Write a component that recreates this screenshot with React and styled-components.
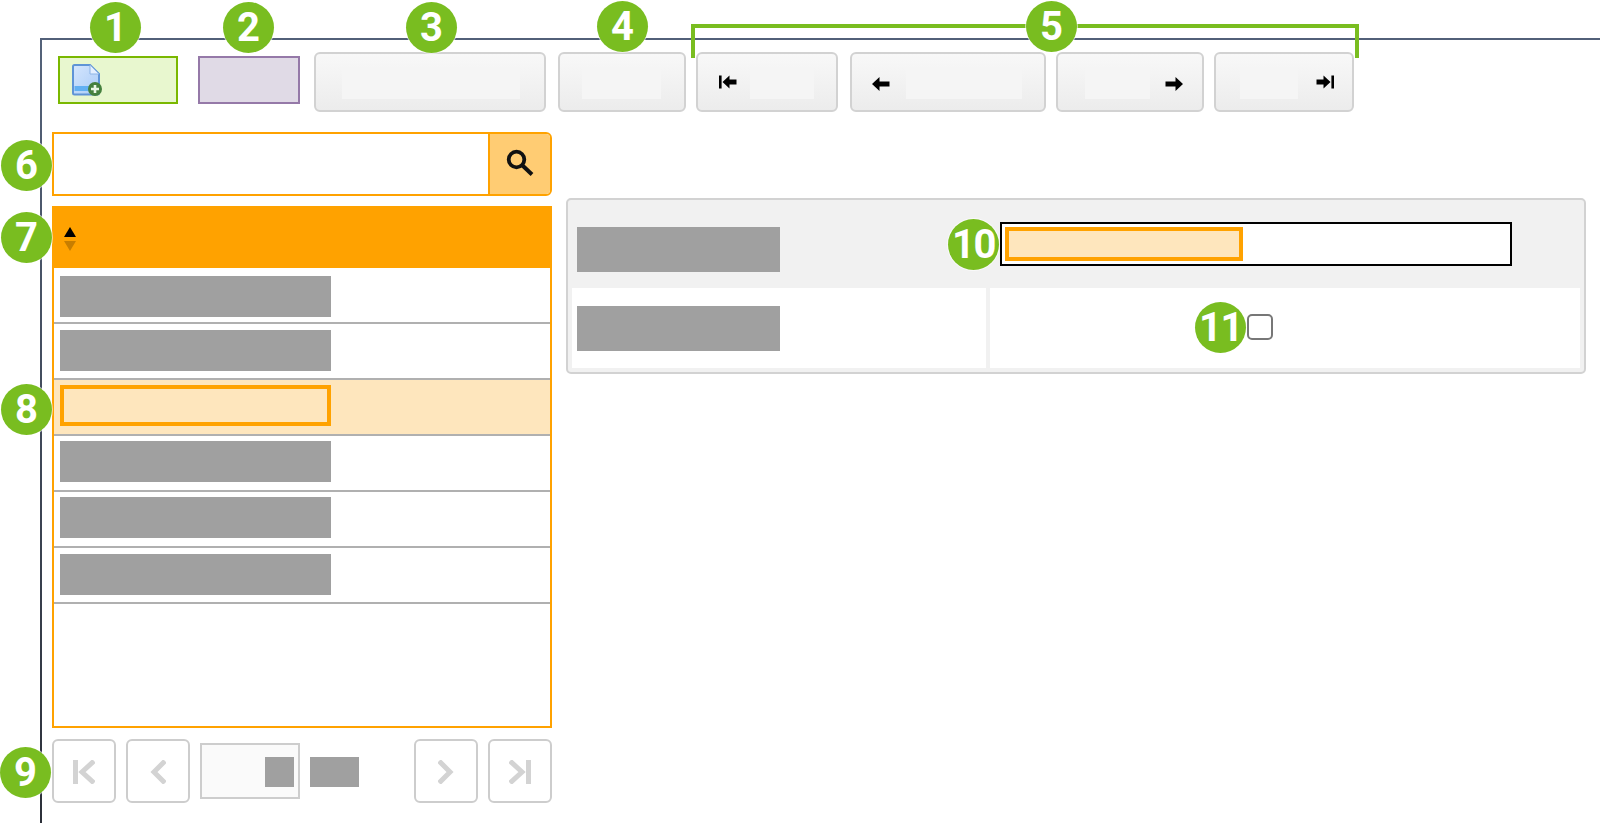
import React from 'react';
import styled, { createGlobalStyle } from 'styled-components';

const palette = {
  green: '#79bd20',
  orange: '#ffa200',
  peach: '#fee6bd',
  gray: '#a0a0a0',
  line: '#d2d2d2',
};

const GlobalStyle = createGlobalStyle`
  html, body {
    margin: 0;
    padding: 0;
    height: 823px;
    overflow: hidden;
    background: #fff;
    font-family: "Liberation Sans", Arial, sans-serif;
  }
  * { box-sizing: border-box; }
`;

const Page = styled.div`
  position: relative;
  width: 1600px;
  height: 823px;
  padding: 38px 0 0 40px;
`;

const Frame = styled.div`
  height: 785px;
  border-top: 2px solid #526079;
  padding: 12px 0 0 2px;
  background: linear-gradient(#55637a, #2c3039) left top / 2px 100% no-repeat;
`;

const Toolbar = styled.div`
  display: flex;
  align-items: flex-start;
  height: 60px;
  padding-left: 16px;
`;

const ColorButton = styled.div`
  width: ${p => p.$w}px;
  height: 48px;
  margin: 4px 0 0 ${p => p.$gap || 0}px;
  padding: 6px 0 0 12px;
  border: 2px solid ${p => p.$border};
  background: ${p => p.$bg};
`;

const ToolButton = styled.div`
  display: flex;
  align-items: center;
  gap: ${p => p.$inner || 0}px;
  width: ${p => p.$w}px;
  height: 60px;
  margin-left: ${p => p.$gap}px;
  padding-left: ${p => p.$pad}px;
  border: 2px solid ${palette.line};
  border-radius: 6px;
  background: linear-gradient(#f8f8f8, #ececec);
`;

const HiddenLabel = styled.span`
  display: block;
  width: ${p => p.$w}px;
  height: 31px;
  margin-top: 3px;
  background: #f5f5f5;
`;

const Blurry = styled.svg`
  display: block;
  flex: none;
  filter: blur(${p => p.$blur || 0.4}px);
`;

const Body = styled.div`
  display: flex;
  align-items: flex-start;
  margin-top: 20px;
  padding-left: 10px;
`;

const LeftColumn = styled.div`
  width: 500px;
`;

const SearchBox = styled.div`
  display: flex;
  height: 64px;
  border: 2px solid ${palette.orange};
  border-radius: 0 6px 6px 0;
`;

const SearchField = styled.div`
  flex: 1;
  background: #fff;
`;

const SearchButton = styled.div`
  display: flex;
  align-items: center;
  justify-content: center;
  width: 62px;
  padding-left: 2px;
  border-left: 2px solid ${palette.orange};
  border-radius: 0 4px 4px 0;
  background: #ffcc73;
`;

const ListBox = styled.div`
  height: 522px;
  margin-top: 10px;
  border: 2px solid ${palette.orange};
  border-top: none;
`;

const ListHeader = styled.div`
  display: flex;
  align-items: center;
  height: 62px;
  margin: 0 -2px;
  padding: 3px 0 0 12px;
  background: ${palette.orange};
`;

const ListRow = styled.div`
  height: 56px;
  padding: ${p => p.$top}px 0 0 6px;
  border-bottom: 2px solid #b0b0b0;
  background: ${p => (p.$selected ? palette.peach : '#fff')};
`;

const RowText = styled.div`
  width: 271px;
  height: 41px;
  background: ${p => (p.$selected ? palette.peach : palette.gray)};
  border: ${p => (p.$selected ? `4px solid ${palette.orange}` : 'none')};
`;

const Pager = styled.div`
  display: flex;
  align-items: center;
  height: 64px;
  margin-top: 11px;
`;

const PageButton = styled.div`
  display: flex;
  align-items: center;
  justify-content: center;
  width: 64px;
  height: 64px;
  margin-left: ${p => p.$gap || 0}px;
  padding-top: 2px;
  border: 2px solid #cdcdcd;
  border-radius: 6px;
  background: #fff;
`;

const PageInput = styled.div`
  display: flex;
  align-items: center;
  justify-content: flex-end;
  width: 101px;
  height: 56px;
  margin-left: 10px;
  padding: 2px 4px 0 0;
  border: 2px solid #cdcdcd;
  background: #fafafa;
`;

const PageNumber = styled.div`
  width: 29px;
  height: 30px;
  background: ${palette.gray};
`;

const PageTotal = styled.div`
  width: 49px;
  height: 30px;
  margin: 2px 55px 0 10px;
  background: ${palette.gray};
`;

const DetailPanel = styled.div`
  width: 1020px;
  height: 176px;
  margin: 66px 0 0 14px;
  padding: 0 4px;
  border: 2px solid ${palette.line};
  border-radius: 5px;
  background: #f1f1f1;
`;

const DetailRow = styled.div`
  display: grid;
  grid-template-columns: 414px 590px;
  gap: 4px;
  height: ${p => p.$h}px;
`;

const NameCell = styled.div`
  padding: ${p => p.$top}px 0 0 5px;
  background: ${p => (p.$white ? '#fff' : 'transparent')};
`;

const ValueCell = styled.div`
  padding: ${p => p.$top}px 0 0 ${p => p.$left}px;
  background: ${p => (p.$white ? '#fff' : 'transparent')};
`;

const FieldName = styled.div`
  width: 203px;
  height: 45px;
  background: ${palette.gray};
`;

const TextInput = styled.div`
  width: 512px;
  height: 44px;
  padding: 3px;
  border: 2px solid #000;
  background: #fff;
`;

const InputValue = styled.div`
  width: 238px;
  height: 34px;
  border: 4px solid ${palette.orange};
  background: ${palette.peach};
`;

const CheckBox = styled.div`
  width: 26px;
  height: 26px;
  border: 2px solid #777;
  border-radius: 5px;
  background: #fff;
`;

const Badge = styled.div`
  position: absolute;
  left: ${p => p.$x - 25}px;
  top: ${p => p.$y - 25}px;
  display: flex;
  align-items: center;
  justify-content: center;
  width: 51px;
  height: 51px;
  border-radius: 50%;
  background: ${palette.green};
  box-shadow: 0 0 0 1px rgba(255, 255, 255, 0.6);
  color: #fff;
  font-family: Roboto, "Liberation Sans", sans-serif;
  font-size: 40px;
  font-weight: 700;
  letter-spacing: ${p => (p.$wide ? '-1.5px' : '0')};
`;

const Bracket = styled.div`
  position: absolute;
  left: 691px;
  top: 24px;
  width: 668px;
  height: 34px;
  border: 4px solid ${palette.green};
  border-bottom: none;
`;

const DocIcon = () => (
  <Blurry width="30" height="32" viewBox="0 0 30 32" $blur={0.5}>
    <defs>
      <linearGradient id="docFill" x1="0" y1="0" x2="1" y2="1">
        <stop offset="0" stopColor="#d5e6fd" />
        <stop offset="1" stopColor="#a9cbf7" />
      </linearGradient>
    </defs>
    <path
      d="M1 2.5 Q1 1 2.5 1 H18 L27 10 V29 Q27 30.5 25.5 30.5 H2.5 Q1 30.5 1 29 Z"
      fill="url(#docFill)"
      stroke="#5f94d6"
      strokeWidth="2"
    />
    <path d="M18 1 V10 H27 Z" fill="#e4efff" stroke="#8db4e6" strokeWidth="1" />
    <rect x="2.5" y="22" width="19" height="5" fill="#62b0f2" />
    <circle cx="23" cy="25" r="7" fill="#45803e" />
    <path d="M23 21 V29 M19 25 H27" stroke="#eaf6e6" strokeWidth="2.6" />
  </Blurry>
);

const SearchIcon = () => (
  <Blurry width="30" height="30" viewBox="0 0 30 30" $blur={0.5}>
    <circle cx="10.5" cy="10.5" r="7.8" fill="none" stroke="#111" strokeWidth="3.8" />
    <path d="M16 16 L26 25.5" stroke="#111" strokeWidth="4" />
  </Blurry>
);

const SortIcon = () => (
  <Blurry width="12" height="26" viewBox="0 0 12 26">
    <path d="M6 1 L12 11 H0 Z" fill="#000" />
    <path d="M6 25 L12 15 H0 Z" fill="#000" opacity="0.22" />
  </Blurry>
);

// toolbar arrows, dir -1 points left, edge draws the stop bar
const ArrowIcon = ({ dir, edge, low }) => (
  <Blurry width="18" height="20" viewBox="0 0 18 20" $blur={0.5}>
    <g transform={`translate(${dir < 0 ? 0 : 18} ${low ? 12 : 10}) scale(${dir < 0 ? 1 : -1} 1)`}>
      {edge && <rect x="0" y="-6.5" width="2.6" height="13" fill="#000" />}
      <path
        d={
          edge
            ? 'M3.5 0 L10.5 -6.5 V-2.6 H17.5 V2.6 H10.5 V6.5 Z'
            : 'M0 0 L7.5 -7 V-2.6 H17.5 V2.6 H7.5 V7 Z'
        }
        fill="#000"
      />
    </g>
  </Blurry>
);

const PageIcon = ({ dir, edge }) => (
  <Blurry
    width={edge ? 22 : 16}
    height="24"
    viewBox={edge ? '0 0 22 24' : '0 0 16 24'}
    $blur={0.7}
  >
    <g
      transform={dir < 0 ? undefined : `translate(${edge ? 22 : 16} 0) scale(-1 1)`}
      fill="none"
      stroke="#d3d3d3"
    >
      {edge && <path d="M2.5 0 V24" strokeWidth="5" />}
      <path d={edge ? 'M21 1 L9 12 L21 23' : 'M15 1 L4 12 L15 23'} strokeWidth="5" />
    </g>
  </Blurry>
);

const rows = [{ top: 8 }, { top: 6 }, { top: 5, selected: true }, { top: 5 }, { top: 5 }, { top: 6 }];

const badges = [
  [115, 27, '1'],
  [248, 27, '2'],
  [431, 27, '3'],
  [622, 26, '4'],
  [1051, 26, '5'],
  [26, 165, '6'],
  [26, 237, '7'],
  [26, 409, '8'],
  [25, 772, '9'],
  [973, 244, '10'],
  [1220, 327, '11'],
];

const App = () => (
  <Page>
    <GlobalStyle />
    <Frame>
      <Toolbar>
        <ColorButton $w={120} $border="#7ab800" $bg="#e8f7cf">
          <DocIcon />
        </ColorButton>
        <ColorButton $w={102} $gap={20} $border="#9579a8" $bg="#e0dae6" />
        <ToolButton $w={232} $gap={14} $pad={26}>
          <HiddenLabel $w={178} />
        </ToolButton>
        <ToolButton $w={128} $gap={12} $pad={22}>
          <HiddenLabel $w={79} />
        </ToolButton>
        <ToolButton $w={142} $gap={10} $pad={21} $inner={13}>
          <ArrowIcon dir={-1} edge />
          <HiddenLabel $w={64} />
        </ToolButton>
        <ToolButton $w={196} $gap={12} $pad={20} $inner={16}>
          <ArrowIcon dir={-1} low />
          <HiddenLabel $w={116} />
        </ToolButton>
        <ToolButton $w={148} $gap={10} $pad={27} $inner={15}>
          <HiddenLabel $w={65} />
          <ArrowIcon dir={1} low />
        </ToolButton>
        <ToolButton $w={140} $gap={10} $pad={24} $inner={18}>
          <HiddenLabel $w={58} />
          <ArrowIcon dir={1} edge />
        </ToolButton>
      </Toolbar>
      <Body>
        <LeftColumn>
          <SearchBox>
            <SearchField />
            <SearchButton>
              <SearchIcon />
            </SearchButton>
          </SearchBox>
          <ListBox>
            <ListHeader>
              <SortIcon />
            </ListHeader>
            {rows.map((row, i) => (
              <ListRow key={i} $top={row.top} $selected={row.selected}>
                <RowText $selected={row.selected} />
              </ListRow>
            ))}
          </ListBox>
          <Pager>
            <PageButton>
              <PageIcon dir={-1} edge />
            </PageButton>
            <PageButton $gap={10}>
              <PageIcon dir={-1} />
            </PageButton>
            <PageInput>
              <PageNumber />
            </PageInput>
            <PageTotal />
            <PageButton>
              <PageIcon dir={1} />
            </PageButton>
            <PageButton $gap={10}>
              <PageIcon dir={1} edge />
            </PageButton>
          </Pager>
        </LeftColumn>
        <DetailPanel>
          <DetailRow $h={88}>
            <NameCell $top={27}>
              <FieldName />
            </NameCell>
            <ValueCell $top={22} $left={10}>
              <TextInput>
                <InputValue />
              </TextInput>
            </ValueCell>
          </DetailRow>
          <DetailRow $h={80}>
            <NameCell $top={18} $white>
              <FieldName />
            </NameCell>
            <ValueCell $top={26} $left={257} $white>
              <CheckBox />
            </ValueCell>
          </DetailRow>
        </DetailPanel>
      </Body>
    </Frame>
    <Bracket />
    {badges.map(([x, y, label]) => (
      <Badge key={label} $x={x} $y={y} $wide={label.length > 1}>
        {label}
      </Badge>
    ))}
  </Page>
);

export default App;
